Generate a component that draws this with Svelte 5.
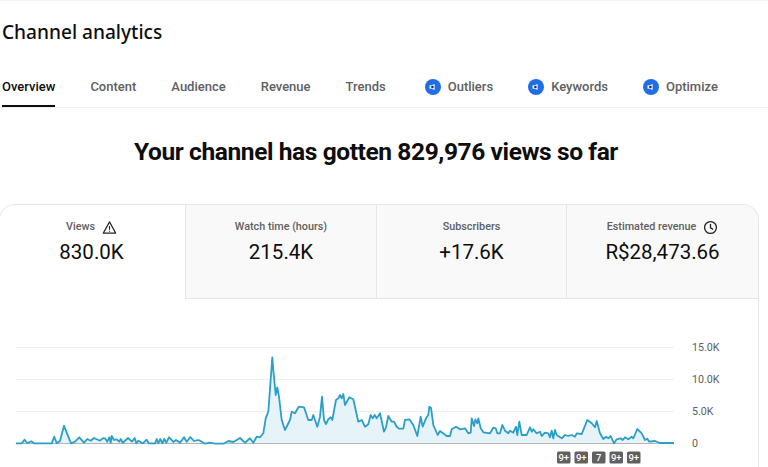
<script>
  const seg = (x0, pts) => pts.map(([x, y]) => [x0 + x / 3, 340 + y / 3]);
  const pts = [
    ...seg(0, [[48,310],[65,310],[74,299],[82,310],[94,304],[102,310],[155,310],[163,290],[170,310],[180,303],[192,257],[205,290],[213,310],[225,305],[238,292],[252,308],[262,297],[272,302],[282,294],[300,302],[308,295],[315,295],[322,305],[328,292],[332,308],[335,288],[342,300],[350,298],[358,305],[362,297],[368,308],[374,303],[384,294],[396,305],[404,294],[409,310],[415,302],[428,310],[440,299],[446,310],[465,310],[470,297],[475,310],[481,297],[487,310],[493,297],[499,308],[507,292],[515,300],[520,306],[528,300],[540,308],[552,292],[560,305],[571,291],[582,303],[594,300]]),
    ...seg(200, [[0,302],[15,311],[30,308],[45,311],[70,311],[85,303],[100,306],[120,294],[135,308],[150,295],[160,308],[170,290],[180,292],[190,280],[197,235],[205,215],[217,52],[220,90],[227,165],[232,142],[237,170],[245,240],[255,270],[270,240],[275,215],[285,220],[296,200],[312,202],[325,240],[335,240],[340,225],[352,260],[360,230],[366,170],[372,240],[378,252],[385,238],[392,232],[397,240],[408,180],[415,175],[420,165],[425,175],[430,162],[435,195],[448,172],[460,178],[475,245],[485,240],[495,260],[505,253],[512,225],[518,235],[524,225],[530,235],[540,220],[552,275],[558,262],[565,228],[575,245],[582,245],[590,260],[598,266]]),
    ...seg(400, [[10,266],[15,240],[28,238],[40,255],[52,288],[62,230],[68,260],[78,235],[85,225],[88,200],[93,203],[100,255],[113,285],[120,273],[140,288],[150,288],[155,268],[168,260],[180,268],[195,265],[205,280],[212,278],[215,235],[222,258],[226,238],[232,250],[235,235],[242,265],[250,277],[270,280],[280,263],[287,265],[292,280],[300,280],[307,255],[315,272],[325,280],[330,272],[340,278],[348,260],[352,285],[358,245],[365,285],[380,285],[390,262],[395,275],[400,268],[410,280],[420,275],[425,288],[435,278],[445,280],[450,292],[455,272],[460,295],[465,270],[470,285],[485,295],[495,285],[505,288],[515,285],[525,290],[530,280],[545,282],[552,265],[562,240],[575,250],[585,262],[590,243],[600,280]]),
    ...seg(550, [[160,297],[168,290],[175,295],[182,288],[192,310],[200,298],[212,295],[218,300],[225,292],[235,298],[245,290],[250,295],[262,267],[275,280],[285,300],[292,296],[298,305],[315,303],[330,309],[372,309]])
  ];
  const line = pts.map(([x, y]) => `${x.toFixed(1)},${y.toFixed(1)}`).join(' ');
  const TOP = 299;
  const area = `16,443.5 ${line} 674,443.5`;
  const grid = [347.5, 379.5, 411.5];
  const labels = [['15.0K', 347.5], ['10.0K', 379.5], ['5.0K', 411.5], ['0', 443]];
  const badges = [[557, '9+'], [574.5, '9+'], [592, '7'], [609.5, '9+'], [627, '9+']];
  const tabs = [
    { t: 'Overview', on: true }, { t: 'Content' }, { t: 'Audience' }, { t: 'Revenue' }, { t: 'Trends' },
    { t: 'Outliers', icon: true, first: true }, { t: 'Keywords', icon: true }, { t: 'Optimize', icon: true }
  ];
  const metrics = [
    { l: 'Views', v: '830.0K', on: true, i: 'warn' },
    { l: 'Watch time (hours)', v: '215.4K' },
    { l: 'Subscribers', v: '+17.6K' },
    { l: 'Estimated revenue', v: 'R$28,473.66', i: 'clock' }
  ];
</script>

<div class="page">
  <h1>Channel analytics</h1>
  <nav>
    {#each tabs as tab}
      <div class="tab" class:on={tab.on} class:first={tab.first}>
        {#if tab.icon}
          <svg class="badge-icon" viewBox="0 0 16 16" width="16" height="16">
            <circle cx="8" cy="8" r="8" fill="#1f6ee6" />
            <path d="M4.5 6.2h2l3.2-1.2v6L6.5 9.8h-2z" fill="#e8f0fe" />
            <circle cx="7.4" cy="8" r="1.3" fill="#12306b" />
          </svg>
        {/if}
        <span>{tab.t}</span>
      </div>
    {/each}
  </nav>
  <h2>Your channel has gotten 829,976 views so far</h2>
  <section class="card">
    <div class="metrics">
      {#each metrics as m}
        <div class="metric" class:on={m.on}>
          <div class="label">
            <span>{m.l}</span>
            {#if m.i === 'warn'}
              <svg viewBox="0 0 16 16" width="15" height="15" fill="none" stroke="#222" stroke-width="1.2">
                <path d="M8 2 14.6 14H1.4z" stroke-linejoin="round" />
                <path d="M8 6.5v4M8 11.4v1.2" />
              </svg>
            {:else if m.i === 'clock'}
              <svg viewBox="0 0 16 16" width="15" height="15" fill="none" stroke="#222" stroke-width="1.4">
                <circle cx="8" cy="8" r="6.3" />
                <path d="M8 4.2V8.4l2.8 1.6" />
              </svg>
            {/if}
          </div>
          <div class="value">{m.v}</div>
        </div>
      {/each}
    </div>
    <svg class="chart" width="758" height="168" viewBox="0 {TOP} 758 168">
      {#each grid as y}
        <line x1="16" x2="674" y1={y} y2={y} stroke="#eeeeee" />
      {/each}
      <polygon points={area} fill="#e6f3f9" />
      <line x1="16" x2="674" y1="443.5" y2="443.5" stroke="#b5b5b5" />
      <polyline points={line} fill="none" stroke="#2b9fc7" stroke-width="1.8" stroke-linejoin="round" />
      {#each labels as [t, y]}
        <text x="692" y={y + 3.5} class="axis">{t}</text>
      {/each}
      {#each badges as [x, t]}
        <rect {x} y="451.5" width="13.5" height="12" rx="1.5" fill="#606060" />
        <text x={x + 6.75} y="461" class="bt">{t}</text>
      {/each}
    </svg>
  </section>
</div>

<style>
  :global(body) {
    margin: 0;
    background: #fff;
    overflow: hidden;
  }
  .page {
    width: 768px;
    height: 467px;
    overflow: hidden;
    box-sizing: border-box;
    border-top: 1px solid #f4f4f4;
    font-family: Roboto, "Liberation Sans", sans-serif;
    color: #0d0d0d;
  }
  h1 {
    margin: 0;
    padding: 17px 0 0 2px;
    font: 500 19.1px/28px "Noto Sans", sans-serif;
    color: #0d0d0d;
  }
  nav {
    display: flex;
    gap: 35px;
    margin-top: 18px;
    height: 44px;
    padding-left: 2px;
    border-bottom: 1px solid #f0f0f0;
    box-sizing: border-box;
    width: 768px;
  }
  .tab {
    position: relative;
    display: flex;
    align-items: flex-start;
    gap: 7px;
    padding-top: 14px;
    font: 500 13px/17px Roboto, sans-serif;
    color: #606060;
  }
  .tab.first {
    margin-left: 4px;
  }
  .tab.on {
    color: #0d0d0d;
    border-bottom: 2px solid #0d0d0d;
    height: 43px;
    box-sizing: border-box;
  }
  .badge-icon {
    display: block;
    margin-top: 1px;
  }
  h2 {
    margin: 0;
    padding-top: 27px;
    text-align: center;
    font: 700 24.5px/34px Roboto, sans-serif;
    letter-spacing: -0.4px;
    height: 69px;
    width: 752px;
    color: #0d0d0d;
    box-sizing: content-box;
  }
  .card {
    width: 760px;
    margin-left: -1px;
    box-sizing: border-box;
    border: 1px solid #e6e6e6;
    border-bottom: 0;
    border-radius: 16px 16px 0 0;
    overflow: hidden;
  }
  .metrics {
    display: grid;
    grid-template-columns: 185px 191px 190px 1fr;
    height: 94px;
  }
  .metric {
    background: #f9f9f9;
    border-left: 1px solid #e6e6e6;
    border-bottom: 1px solid #e6e6e6;
    box-sizing: border-box;
    text-align: center;
    padding-top: 14px;
  }
  .metric:first-child {
    border-left: 0;
    padding-right: 2px;
  }
  .metric.on {
    background: #fff;
    border-bottom-color: #fff;
  }
  .label {
    display: flex;
    justify-content: center;
    align-items: center;
    gap: 7px;
    height: 16px;
    font: 500 10.8px/16px Roboto, sans-serif;
    color: #606060;
  }
  .value {
    margin-top: 3px;
    font: 400 20.5px/28px Roboto, sans-serif;
    color: #0d0d0d;
  }
  .chart {
    display: block;
  }
  .axis {
    font: 400 10.7px Roboto, sans-serif;
    fill: #606060;
  }
  .bt {
    font: 500 9.5px Roboto, sans-serif;
    fill: #fff;
    text-anchor: middle;
  }
</style>
